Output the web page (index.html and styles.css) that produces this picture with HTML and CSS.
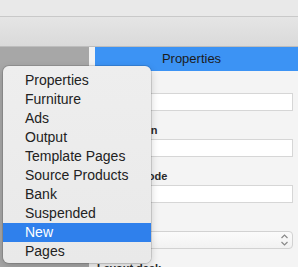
FILE: index.html
```html
<!DOCTYPE html>
<html lang="en">
<head>
    <meta charset="UTF-8">
    <meta name="viewport" content="width=device-width, initial-scale=1.0">
    <title>Properties</title>
    <link rel="stylesheet" href="styles.css">
</head>
<body>
    <div class="titlebar"></div>
    <div class="toolbar"></div>

    <div class="main">
        <div class="sidebar"></div>
        <div class="panel">
            <div class="panel-header">Properties</div>
            <div class="fields">
                <div class="field">
                    <label>Name</label>
                    <input type="text" class="text-input">
                </div>
                <div class="field">
                    <label>Description</label>
                    <input type="text" class="text-input">
                </div>
                <div class="field">
                    <label>Product code</label>
                    <input type="text" class="text-input">
                </div>
                <div class="field">
                    <label>Section</label>
                    <div class="select">
                        <svg class="stepper" width="9" height="14" viewBox="0 0 9 14">
                            <path d="M1.5 5 L4.5 2 L7.5 5" fill="none" stroke="#8a8a8a" stroke-width="1.2"/>
                            <path d="M1.5 9 L4.5 12 L7.5 9" fill="none" stroke="#8a8a8a" stroke-width="1.2"/>
                        </svg>
                    </div>
                </div>
                <div class="field">
                    <label>Layout desk</label>
                </div>
            </div>
        </div>
    </div>

    <!-- popup menu -->
    <ul class="menu">
        <li>Properties</li>
        <li>Furniture</li>
        <li>Ads</li>
        <li>Output</li>
        <li>Template Pages</li>
        <li>Source Products</li>
        <li>Bank</li>
        <li>Suspended</li>
        <li class="selected">New</li>
        <li>Pages</li>
    </ul>
</body>
</html>
```

FILE: styles.css
```css
body {
    margin: 0;
    width: 298px;
    height: 267px;
    overflow: hidden;
    font-family: 'Liberation Sans', Arial, sans-serif;
    background: #f4f4f4;
    color: #222;
}
.titlebar {
    height: 16px;
    background: #e9e9e9;
    border-bottom: 1px solid #c9c9c9;
}
.toolbar {
    height: 29px;
    background: linear-gradient(#e5e5e5, #dadada);
    border-bottom: 1px solid #bdbdbd;
}
.main {
    display: grid;
    grid-template-columns: 89px 1fr;
    height: 220px;
}
.sidebar {
    background: #a7a7a7;
}
.panel {
    background: #f4f4f4;
    overflow: hidden;
}
.panel-header {
    height: 24px;
    line-height: 24px;
    background: #3c93f4;
    border-left: 6px solid #f2f2f2;
    text-align: center;
    font-size: 13px;
    color: #1b1b1b;
    padding-right: 10px;
}
.fields {
    padding: 6px 5px 0 8px;
}
.field {
    margin-bottom: 12px;
}
.field label {
    display: block;
    font-size: 11px;
    font-weight: bold;
    color: #2a2a2a;
    height: 14px;
    line-height: 14px;
    margin-bottom: 2px;
}
.text-input {
    display: block;
    box-sizing: border-box;
    width: 100%;
    height: 18px;
    margin: 0;
    border: 1px solid #d6d6d6;
    background: #fff;
}
.select {
    box-sizing: border-box;
    height: 18px;
    border: 1px solid #d2d2d2;
    border-radius: 4px;
    background: linear-gradient(#fbfbfb, #f2f2f2);
    display: flex;
    justify-content: flex-end;
    align-items: center;
    padding-right: 3px;
}
.menu {
    position: absolute;
    left: 3px;
    top: 66px;
    width: 148px;
    margin: 0;
    padding: 5px 0 2px;
    list-style: none;
    box-sizing: border-box;
    background: linear-gradient(#eeeeee, #e9e9e9);
    border-radius: 6px;
    box-shadow: 0 0 0 1px rgba(0,0,0,0.12), 0 3px 8px rgba(0,0,0,0.18);
}
.menu li {
    height: 19px;
    line-height: 19px;
    padding-left: 22px;
    font-size: 14px;
    color: #222;
}
.menu li.selected {
    background: #2f80ec;
    color: #fff;
}
```
